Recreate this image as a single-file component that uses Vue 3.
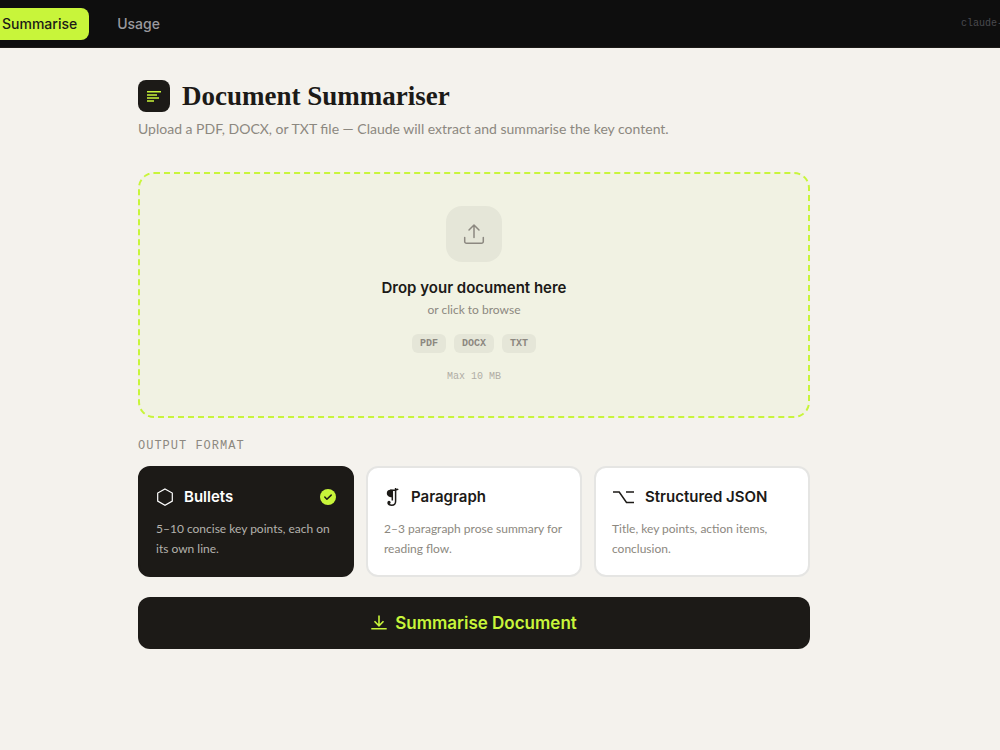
<script setup>
import { ref } from 'vue'

const format = ref('bullets')
const fileTypes = ['PDF', 'DOCX', 'TXT']
const formats = [
  { id: 'bullets', title: 'Bullets', text: '5–10 concise key points, each on its own line.' },
  { id: 'paragraph', title: 'Paragraph', text: '2–3 paragraph prose summary for reading flow.' },
  { id: 'json', title: 'Structured JSON', text: 'Title, key points, action items, conclusion.' }
]
</script>

<template>
  <div class="page">
    <header class="topbar">
      <nav class="tabs">
        <a href="#summarise" class="tab active" aria-current="page">Summarise</a>
        <a href="#usage" class="tab">Usage</a>
      </nav>
      <span class="model">claude-</span>
    </header>

    <div class="content">
      <main class="column">
        <div class="heading">
          <span class="logo">
            <svg width="16" height="16" viewBox="0 0 16 16" fill="none" stroke="#c8f53a" stroke-width="1.5" stroke-linecap="butt" aria-hidden="true">
              <path d="M1 3.75h14M1 6.9h10M1 10h12M1 13h7" />
            </svg>
          </span>
          <h1>Document Summariser</h1>
        </div>
        <p class="intro">Upload a PDF, DOCX, or TXT file — Claude will extract and summarise the key content.</p>

        <label class="dropzone">
          <input class="hidden-input" type="file" accept=".pdf,.docx,.txt">
          <span class="upload">
            <svg width="24" height="24" viewBox="0 0 24 24" fill="none" stroke="#8c8880" stroke-width="1.5" stroke-linecap="round" stroke-linejoin="round" aria-hidden="true">
              <path d="M12 15.5V3M7 8l5-5 5 5M2.7 15.5v4a1.8 1.8 0 0 0 1.8 1.8h15a1.8 1.8 0 0 0 1.8-1.8v-4" />
            </svg>
          </span>
          <span class="drop-title">Drop your document here</span>
          <span class="drop-hint">or click to browse</span>
          <span class="types">
            <span v-for="type in fileTypes" :key="type" class="type">{{ type }}</span>
          </span>
          <span class="limit">Max 10 MB</span>
        </label>

        <fieldset class="formats">
          <legend>OUTPUT FORMAT</legend>
          <div class="cards">
            <label v-for="item in formats" :key="item.id" class="card" :class="{ selected: format === item.id }">
              <input v-model="format" class="hidden-input" type="radio" name="format" :value="item.id">
              <span class="card-head">
                <svg v-if="item.id === 'bullets'" width="18" height="20" viewBox="0 0 18 20" fill="none" stroke="currentColor" stroke-width="1.2" aria-hidden="true">
                  <path d="M9 2l7.3 4.1v8L9 18.2l-7.3-4.1v-8z" />
                </svg>
                <svg v-else-if="item.id === 'paragraph'" width="17" height="20" viewBox="0 0 17 20" fill="none" stroke="currentColor" aria-hidden="true">
                  <path d="M8.5 2.8H6.5C3.9 2.8 2.8 4.4 2.8 6.2s1.3 4 5.7 4z" fill="currentColor" stroke="none" />
                  <path d="M6 3.2c3.5.4 6 .2 8.3-1M8.3 3v10.4M11.6 1v13.2c0 2.7-1.6 4-3.9 4-2 0-3.3-.8-3.6-2.2" stroke-width="1.5" />
                  <circle cx="5" cy="15.4" r="1.6" fill="currentColor" stroke="none" />
                </svg>
                <svg v-else width="23" height="20" viewBox="0 0 23 20" fill="none" stroke="currentColor" stroke-width="1.5" aria-hidden="true">
                  <path d="M1 5h6.2l7.3 10.5H22M14 5h8" />
                </svg>
                <span class="card-title">{{ item.title }}</span>
                <span v-if="format === item.id" class="check">
                  <svg width="10" height="10" viewBox="0 0 10 10" fill="none" stroke="#1c1a17" stroke-width="1.5" stroke-linecap="round" stroke-linejoin="round" aria-hidden="true">
                    <path d="M1.8 5l2.1 2.2 4.3-4.1" />
                  </svg>
                </span>
              </span>
              <span class="card-text">{{ item.text }}</span>
            </label>
          </div>
        </fieldset>

        <button type="button" class="submit">
          <svg width="16" height="16" viewBox="0 0 16 16" fill="none" stroke="currentColor" stroke-width="1.6" aria-hidden="true">
            <path d="M8 .5v10.3M3.5 6.3L8 10.8l4.5-4.5M.3 13.8h15.4" />
          </svg>
          Summarise Document
        </button>
      </main>
    </div>
  </div>
</template>

<style>
body {
  margin: 0;
  background: #f4f2ed;
}
</style>

<style scoped>
.page,
.page * {
  box-sizing: border-box;
}
.page {
  min-height: 100vh;
  overflow-x: hidden;
  background: #f4f2ed;
  color: #1c1a17;
  font-family: Lato, "Liberation Sans", sans-serif;
}
.topbar {
  display: flex;
  align-items: center;
  justify-content: space-between;
  height: 48px;
  background: #0e0e0e;
  border-bottom: 1px solid #1c1a17;
  overflow: hidden;
}
.tabs {
  display: flex;
  gap: 16px;
  margin-left: -10px;
}
.tab {
  padding: 0 12px;
  border-radius: 8px;
  font: 500 14px/32px Inter, sans-serif;
  color: #9a9a9f;
  text-decoration: none;
}
.tab.active {
  background: #c8f53a;
  color: #1c1a17;
}
.model {
  margin-right: -3px;
  font: 10px/18px "Liberation Mono", monospace;
  color: #4a4a4e;
}
.content {
  padding: 32px 52px 48px 0;
}
.column {
  width: 100%;
  max-width: 720px;
  margin: 0 auto;
  padding: 0 24px;
}
.heading {
  display: flex;
  align-items: center;
  gap: 12px;
}
.logo {
  display: flex;
  align-items: center;
  justify-content: center;
  width: 32px;
  height: 32px;
  border-radius: 8px;
  background: #1c1a17;
}
h1 {
  margin: 0;
  font: 700 27px/32px "Liberation Serif", serif;
}
.intro {
  margin: 7px 0 33px;
  font-size: 14px;
  line-height: 20px;
  color: #8c8880;
}
.dropzone {
  position: relative;
  display: flex;
  flex-direction: column;
  align-items: center;
  padding: 32px;
  border: 2px dashed #c8f53a;
  border-radius: 16px;
  background: #f1f2e3;
  cursor: pointer;
}
.hidden-input {
  position: absolute;
  width: 1px;
  height: 1px;
  margin: 0;
  opacity: 0;
}
.upload {
  display: flex;
  align-items: center;
  justify-content: center;
  width: 56px;
  height: 56px;
  margin-bottom: 16px;
  border-radius: 16px;
  background: #e5e6d8;
}
.drop-title {
  font: 600 15px/20px Inter, sans-serif;
}
.drop-hint {
  margin-top: 2px;
  font-size: 12px;
  line-height: 20px;
  color: #8c8880;
}
.types {
  display: flex;
  gap: 8px;
  margin-top: 14px;
}
.type {
  padding: 0 8px;
  border-radius: 6px;
  background: #e5e6d8;
  color: #8c8880;
  font: 700 10px/19px "Liberation Mono", monospace;
}
.limit {
  margin-top: 16px;
  font: 10px/15px "Liberation Mono", monospace;
  color: #b0ada5;
}
.formats {
  min-width: 0;
  margin: 20px 0;
  padding: 0;
  border: 0;
}
legend {
  margin-bottom: 12px;
  padding: 0;
  font: 12px/16px "Liberation Mono", monospace;
  letter-spacing: 1px;
  color: #8c8880;
}
.cards {
  display: grid;
  grid-template-columns: repeat(3, 1fr);
  gap: 12px;
}
.card {
  position: relative;
  padding: 16px;
  border: 2px solid #e5e5e3;
  border-radius: 12px;
  background: #fff;
  cursor: pointer;
}
.card.selected {
  border-color: #1c1a17;
  background: #1c1a17;
  color: #fff;
}
.card-head {
  display: flex;
  align-items: center;
  gap: 10px;
  height: 26px;
}
.card-title {
  font: 600 15px/20px Inter, sans-serif;
}
.check {
  display: flex;
  align-items: center;
  justify-content: center;
  width: 16px;
  height: 16px;
  margin-left: auto;
  border-radius: 50%;
  background: #c8f53a;
}
.card-text {
  display: block;
  margin-top: 9px;
  font-size: 12px;
  line-height: 20px;
  color: #8c8880;
}
.selected .card-text {
  color: #b4b2ad;
}
.submit {
  display: flex;
  align-items: center;
  justify-content: center;
  gap: 8px;
  width: 100%;
  height: 52px;
  border: 0;
  border-radius: 12px;
  background: #1c1a17;
  color: #c8f53a;
  font: 600 17px/24px Inter, sans-serif;
  cursor: pointer;
}
</style>
